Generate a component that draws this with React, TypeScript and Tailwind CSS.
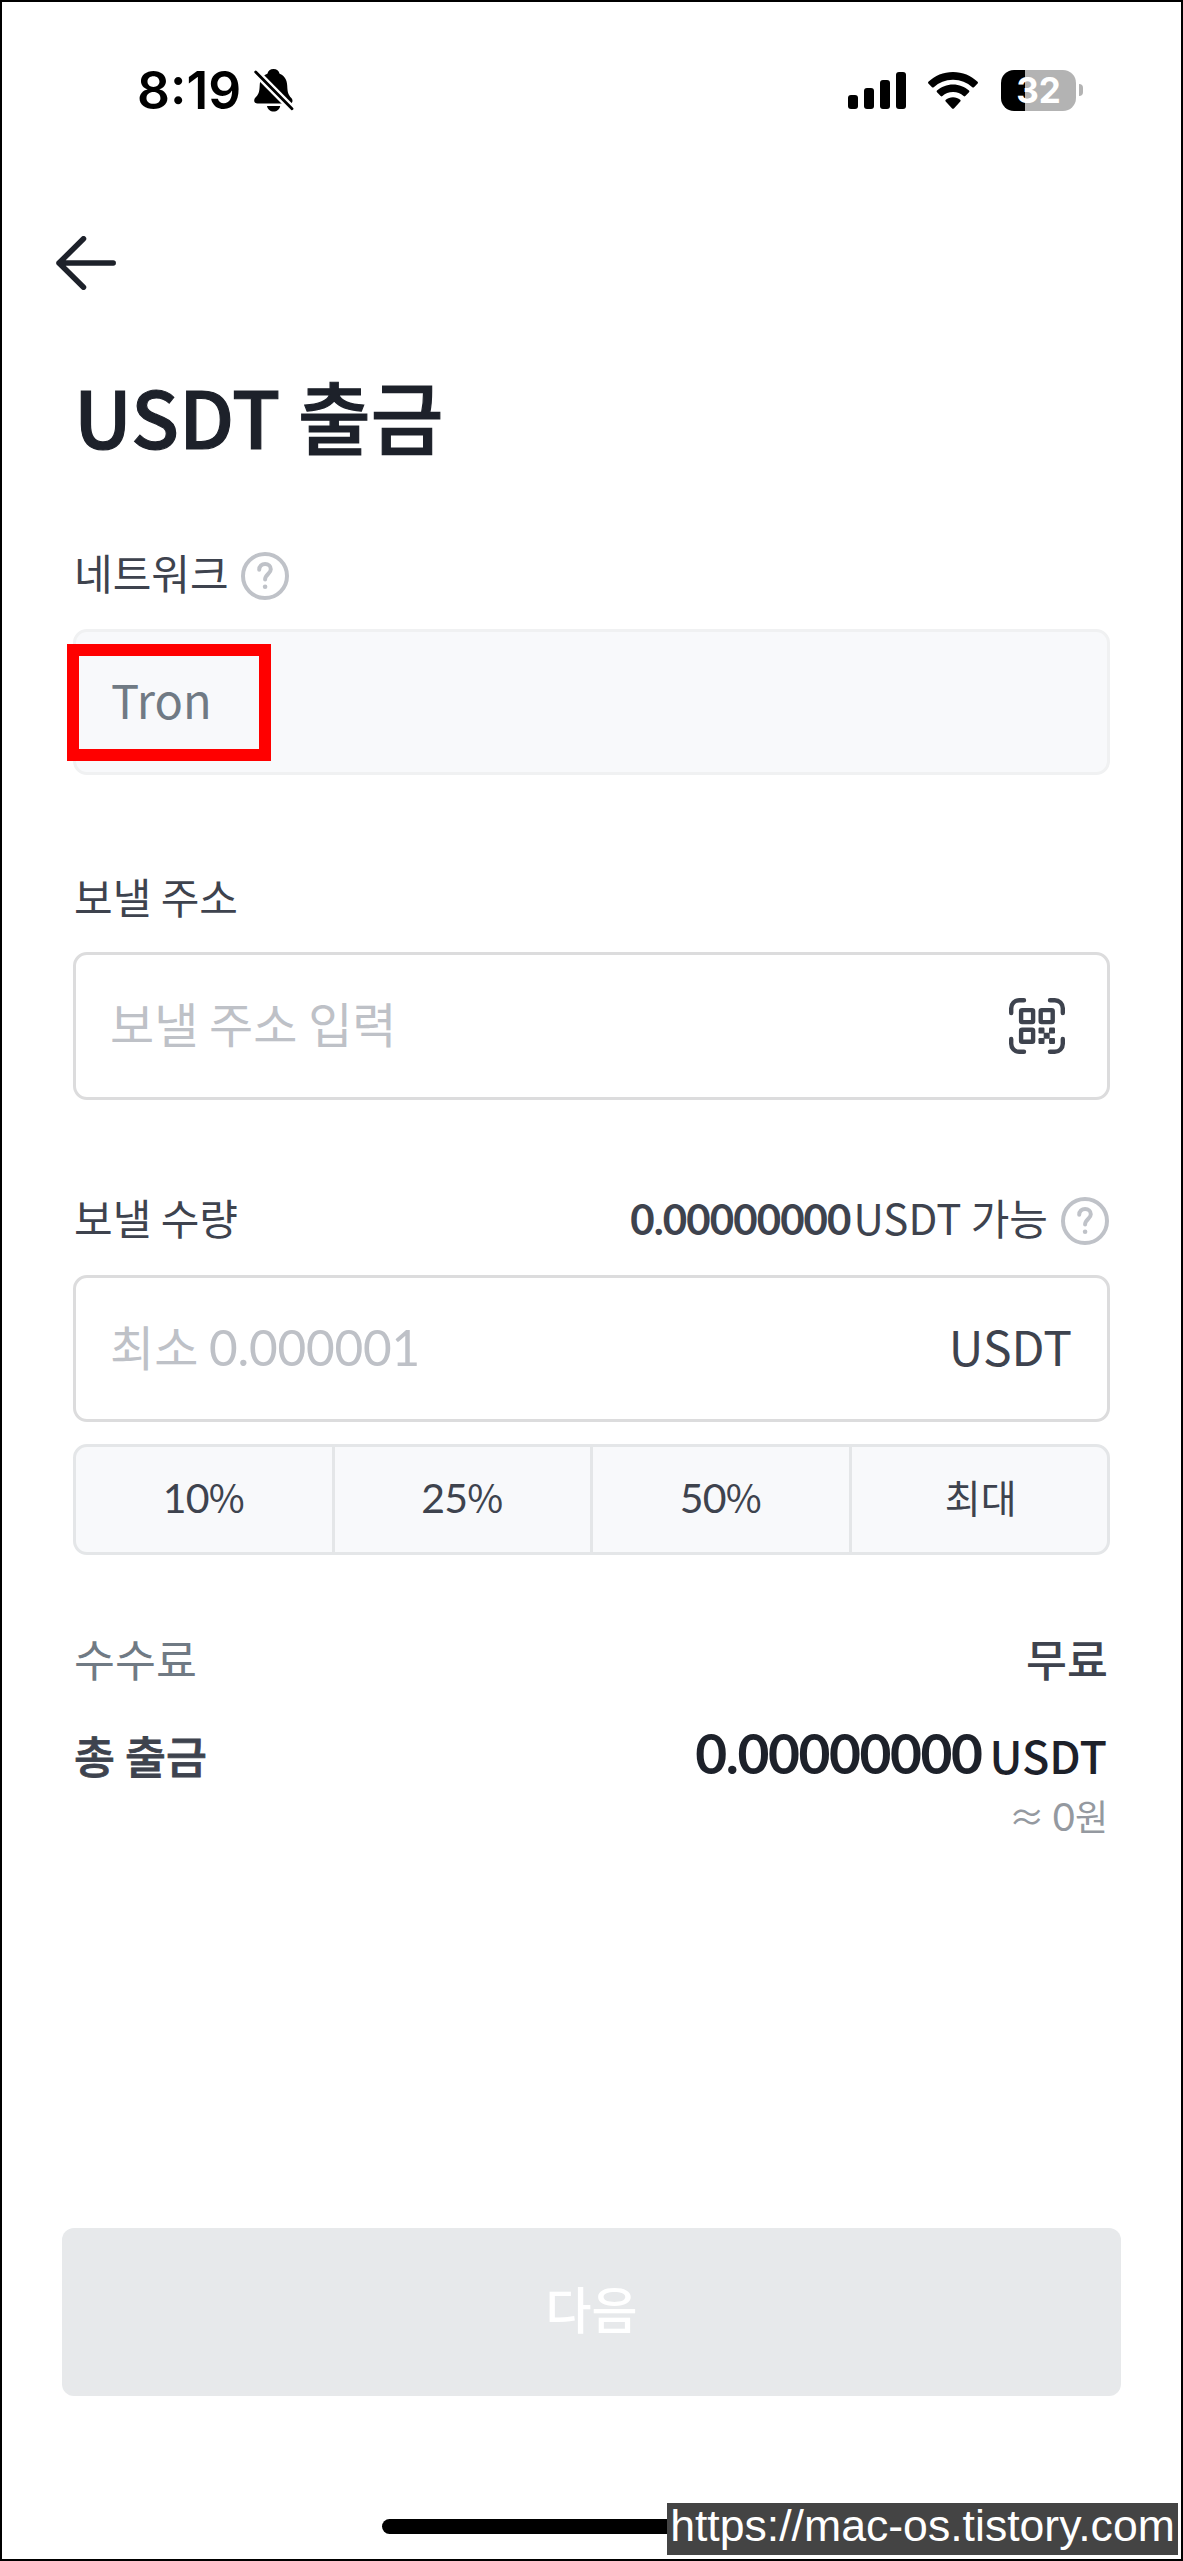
import { useState } from 'react'
import type { ReactNode } from 'react'
import clsx from 'clsx'

const RATIOS = ['10', '25', '50', 'max']

/** Digits are set in Lato, everything else in Noto Sans */
function Num({ children, className }: { children: ReactNode; className?: string }) {
  return <span className={clsx("font-['Lato',sans-serif] leading-none", className)}>{children}</span>
}

function HelpIcon() {
  return (
    <svg viewBox="0 0 48 48" className="h-12 w-12 shrink-0" fill="none" stroke="#bfc2c8" strokeWidth="4">
      <circle cx="24" cy="24" r="22" />
      <path d="M18.2 17.800c0-3.800 2.600-5.800 5.900-5.800 3.300 0 5.700 2.100 5.700 5.200 0 4.600-5.700 5-5.700 10.300" strokeLinecap="round" />
      <circle cx="24.1" cy="34.800" r="2.300" fill="#bfc2c8" stroke="none" />
    </svg>
  )
}

function ScanIcon() {
  return (
    <svg viewBox="0 0 56 56" className="h-14 w-14" fill="none" stroke="#3e434e" strokeWidth="4.4">
      <path
        d="M2.2 15V10.2a8 8 0 0 1 8-8H15M41 2.2h4.8a8 8 0 0 1 8 8V15M2.2 41v4.8a8 8 0 0 0 8 8H15M41 53.8h4.8a8 8 0 0 0 8-8V41"
        strokeLinecap="round"
      />
      <rect x="12.1" y="12.1" width="12" height="12" rx="1" />
      <rect x="31.7" y="12.1" width="12" height="12" rx="1" />
      <rect x="12.1" y="31.7" width="12" height="12" rx="1" />
      <g fill="#3e434e" stroke="none">
        <rect x="29.5" y="29.5" width="6" height="6" rx="1.2" />
        <rect x="40" y="29.5" width="6" height="6" rx="1.2" />
        <rect x="34.7" y="34.8" width="6" height="6" rx="0.8" />
        <rect x="29.5" y="40" width="6" height="6" rx="1.2" />
        <rect x="40" y="40" width="6" height="6" rx="1.2" />
      </g>
    </svg>
  )
}

function BellOffIcon() {
  return (
    <svg viewBox="0 0 40 43" className="h-[43px] w-10">
      <path d="M19.5 0c3.2 0 5.5 2 6.1 4.8 4.8 1.9 7.4 6 7.6 11.7.3 7.5 1.2 9.3 3.9 12.2 1 1.1 1.4 2 1.4 3.2 0 1.7-1.2 2.6-3.2 2.6H3.6C1.5 34.5.2 33.4.2 31.5c0-1.3.5-2.3 1.5-3.3 2.8-2.9 3.7-4.5 4-11.7.2-5.7 2.9-9.8 7.7-11.7C14 2 16.3 0 19.5 0Z" />
      <path d="M13 37h13.2c-.6 3.4-3.4 5.6-6.6 5.6S13.6 40.4 13 37Z" />
      <path d="M0 1.3 40 41.8" stroke="#fff" strokeWidth="7.5" />
      <path d="M1.7 3 38 39.8" stroke="#000" strokeWidth="2.8" strokeLinecap="round" />
    </svg>
  )
}

function StatusBar() {
  return (
    <div className="flex h-[176px] items-center pr-[98px] pl-[135px] font-['Inter',sans-serif] text-black">
      <span className="w-[104px] pt-[2px] text-[51.5px] leading-none font-semibold whitespace-nowrap">8:19</span>
      <div className="ml-[13px]">
        <BellOffIcon />
      </div>
      <svg viewBox="0 0 58 37" className="ml-auto h-[37px] w-[58px]">
        <rect x="0" y="23" width="10" height="14" rx="3" />
        <rect x="16" y="16" width="10" height="21" rx="3" />
        <rect x="32" y="8" width="10" height="29" rx="3" />
        <rect x="48" y="0" width="10" height="37" rx="3" />
      </svg>
      <svg viewBox="0 0 50 37" className="ml-[22px] h-[37px] w-[50px]">
        <path d="M25 0C34.5 0 43.3 3.7 49.6 9.8c.5.5.5 1.2 0 1.7l-3.6 3.7c-.5.5-1.2.5-1.7 0A28 28 0 0 0 25 7.7 28 28 0 0 0 5.7 15.2c-.5.5-1.2.5-1.7 0L.4 11.5c-.5-.5-.5-1.2 0-1.7C6.7 3.7 15.5 0 25 0Z" />
        <path d="M25 12.4c6.2 0 11.8 2.3 16 6.2.5.5.5 1.2 0 1.7l-3.7 3.8c-.5.5-1.2.5-1.7 0A15.6 15.6 0 0 0 25 20.1c-4.1 0-7.8 1.5-10.6 4-.5.5-1.2.5-1.7 0L9 20.3c-.5-.5-.5-1.2 0-1.7 4.2-3.9 9.8-6.2 16-6.2Z" />
        <path d="M25 25.2c2.8 0 5.3 1 7.2 2.6.6.5.6 1.2.1 1.7l-6.4 6.9c-.5.5-1.3.5-1.8 0l-6.4-6.9c-.5-.5-.5-1.2.1-1.7 1.9-1.6 4.4-2.6 7.2-2.6Z" />
      </svg>
      <div className="ml-[23px] flex items-center">
        <div className="flex h-[41px] w-[75px] items-center justify-center rounded-[13px] bg-[linear-gradient(to_right,#000_24px,#b3b3b3_24px)]">
          <span className="text-[35px] leading-none font-bold text-white">32</span>
        </div>
        <div className="ml-[3px] h-3 w-1 rounded-r-full bg-[#b3b3b3]" />
      </div>
    </div>
  )
}

export default function App() {
  const [address, setAddress] = useState('')

  return (
    <div className="relative h-[2561px] w-[1183px] overflow-hidden border-2 border-black bg-white font-['Noto_Sans_CJK_KR',sans-serif] text-[#3e434e]">
      <StatusBar />

      <header className="flex h-[170px] items-center pl-[54px]">
        <svg viewBox="0 0 60 54" className="h-[54px] w-[60px]" fill="none" stroke="#1d212a" strokeWidth="5.5" strokeLinecap="round" strokeLinejoin="round">
          <path d="M57.2 27H3M27.5 2.8 3 27l24.5 24.2" />
        </svg>
      </header>

      <main className="flex flex-col px-[71px]">
        <h1 className="pl-px text-[79px] leading-[134px] font-medium text-[#1d212a] [-webkit-text-stroke:1.2px_#1d212a]">USDT 출금</h1>

        <div className="mt-16 flex h-[60px] items-center pl-px">
          <label className="pb-[9px] text-[42px] leading-[51px]">네트워크</label>
          <div className="ml-[12px]">
            <HelpIcon />
          </div>
        </div>
        <div className="relative mt-[23px] flex h-[146px] items-center rounded-[14px] border-[3px] border-[#f0f1f2] bg-[#f8f9fb] pb-[7px] pl-[35px] text-[47px] leading-[60px] text-[#707a84]">
          Tron
          {/* highlight frame */}
          <div className="absolute top-[12px] -left-[9px] h-[117px] w-[204px] border-[12px] border-[#ff0000]" />
        </div>

        <label className="mt-[91px] pl-px text-[42px] leading-[60px]">보낼 주소</label>
        <div className="mt-[26px] flex h-[148px] items-center justify-between rounded-[14px] border-[3px] border-[#dcdcdd] pr-[42px] pl-[34px]">
          <input
            value={address}
            onChange={(e) => setAddress(e.target.value)}
            placeholder="보낼 주소 입력"
            className="h-[78px] w-[700px] pb-2 text-[48px] outline-none placeholder:text-[#bec1c7]"
          />
          <ScanIcon />
        </div>

        <div className="mt-[91px] flex h-[60px] items-center pr-px pl-px">
          <label className="pb-[8px] text-[42px] leading-[50px]">보낼 수량</label>
          <div className="ml-auto pb-[9px] text-[42px] leading-[50px] whitespace-nowrap">
            <Num className="mr-[3px] text-[42px] font-bold tracking-[-0.9px]">0.00000000</Num>
            USDT 가능
          </div>
          <div className="ml-[13px]">
            <HelpIcon />
          </div>
        </div>
        <div className="mt-6 flex h-[147px] items-center justify-between rounded-[14px] border-[3px] border-[#dcdcdd] pr-[35px] pb-2 pl-[34px] text-[48px] leading-[60px]">
          <span className="text-[#bec1c7]">
            최소 <Num className="text-[49.5px] tracking-[-0.2px]">0.000001</Num>
          </span>
          <span>USDT</span>
        </div>

        <div className="mt-[22px] flex h-[111px] divide-x-[3px] divide-[#e4e6e8] rounded-[14px] border-[3px] border-[#e4e6e8] bg-[#f8f9fb]">
          {RATIOS.map((r) => (
            <button key={r} className="flex-1 pb-2 text-[39px] leading-[60px]">
              {r === 'max' ? (
                <span className="pl-[3px]">최대</span>
              ) : (
                <>
                  <Num className="text-[41px] tracking-[-0.8px]">{r}</Num>%
                </>
              )}
            </button>
          ))}
        </div>

        <div className="mt-[73px] flex justify-between pr-[2px] pl-px text-[44.5px] leading-[60px]">
          <span className="text-[#707a84]">수수료</span>
          <span className="font-medium">무료</span>
        </div>
        <div className="mt-[36px] flex h-[60px] justify-between pr-[3px] pl-px text-[44.5px] leading-[62px]">
          <span className="font-medium [-webkit-text-stroke:0.8px_#3e434e]">총 출금</span>
          <span className="font-medium text-[#1d212a]">
            <Num className="mr-[8px] text-[55px] font-bold tracking-[-1.4px]">0.00000000</Num>
            <span className="text-[45px]">USDT</span>
          </span>
        </div>
        <div className="mt-[11px] pr-[2px] text-right text-[36px] leading-[40px] text-[#9499a0]">
          ≈ <Num className="text-[38px]">0</Num>원
        </div>
      </main>

      <div className="mt-[393px] px-[60px]">
        <button className="h-[168px] w-full rounded-[12px] bg-[#e7e9eb] pb-[10px] text-[50px] font-medium text-white">다음</button>
      </div>
      <div className="mx-auto mt-[123px] h-[15px] w-[420px] rounded-full bg-black" />

      <div className="absolute right-[3px] bottom-[4px] flex h-[52px] w-[511px] items-center justify-center bg-[#444] pb-1.5 font-['Liberation_Sans',sans-serif] text-[44.6px] leading-[46px] whitespace-nowrap text-white">
        https://mac-os.tistory.com
      </div>
    </div>
  )
}
